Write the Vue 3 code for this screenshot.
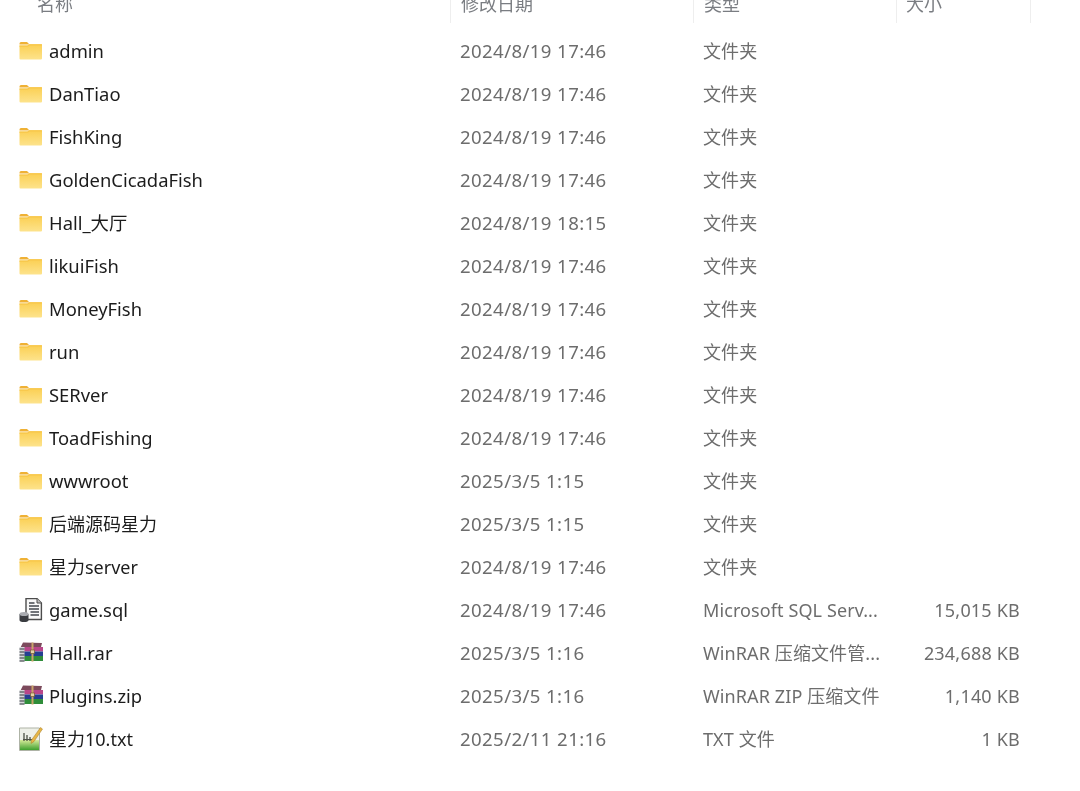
<script setup>
const rows = [
  { icon: 'folder', name: 'admin', date: '2024/8/19 17:46', type: '文件夹', size: '' },
  { icon: 'folder', name: 'DanTiao', date: '2024/8/19 17:46', type: '文件夹', size: '' },
  { icon: 'folder', name: 'FishKing', date: '2024/8/19 17:46', type: '文件夹', size: '' },
  { icon: 'folder', name: 'GoldenCicadaFish', date: '2024/8/19 17:46', type: '文件夹', size: '' },
  { icon: 'folder', name: 'Hall_大厅', date: '2024/8/19 18:15', type: '文件夹', size: '' },
  { icon: 'folder', name: 'likuiFish', date: '2024/8/19 17:46', type: '文件夹', size: '' },
  { icon: 'folder', name: 'MoneyFish', date: '2024/8/19 17:46', type: '文件夹', size: '' },
  { icon: 'folder', name: 'run', date: '2024/8/19 17:46', type: '文件夹', size: '' },
  { icon: 'folder', name: 'SERver', date: '2024/8/19 17:46', type: '文件夹', size: '' },
  { icon: 'folder', name: 'ToadFishing', date: '2024/8/19 17:46', type: '文件夹', size: '' },
  { icon: 'folder', name: 'wwwroot', date: '2025/3/5 1:15', type: '文件夹', size: '' },
  { icon: 'folder', name: '后端源码星力', date: '2025/3/5 1:15', type: '文件夹', size: '' },
  { icon: 'folder', name: '星力server', date: '2024/8/19 17:46', type: '文件夹', size: '' },
  { icon: 'sql', name: 'game.sql', date: '2024/8/19 17:46', type: 'Microsoft SQL Serv...', size: '15,015 KB' },
  { icon: 'rar', name: 'Hall.rar', date: '2025/3/5 1:16', type: 'WinRAR 压缩文件管...', size: '234,688 KB' },
  { icon: 'rar', name: 'Plugins.zip', date: '2025/3/5 1:16', type: 'WinRAR ZIP 压缩文件', size: '1,140 KB' },
  { icon: 'txt', name: '星力10.txt', date: '2025/2/11 21:16', type: 'TXT 文件', size: '1 KB' },
]
const startsCjk = (name) => /^[^\x00-\x7f]/.test(name)
</script>

<template>
  <div class="page">
    <svg width="0" height="0" class="defs">
      <defs>
        <linearGradient id="folderBody" x1="0" y1="0" x2="0" y2="1">
          <stop offset="0" stop-color="#fbcf52" />
          <stop offset="1" stop-color="#fde38c" />
        </linearGradient>
        <linearGradient id="txtGreen" x1="0" y1="0" x2="0" y2="1">
          <stop offset="0" stop-color="#d6ea9a" />
          <stop offset="1" stop-color="#3fa02e" />
        </linearGradient>
      </defs>
    </svg>

    <div class="header">
      <div class="head-cell head-name">名称</div>
      <div class="head-cell">修改日期</div>
      <div class="head-cell">类型</div>
      <div class="head-cell head-size">大小</div>
      <div class="head-rest"></div>
    </div>

    <div class="list">
      <div v-for="row in rows" :key="row.name" class="row">
        <div class="name-cell">
          <svg v-if="row.icon === 'folder'" class="icon" viewBox="0 0 24 24">
            <path d="M0.5 4.5 Q0.5 3 2 3 H8 L10.5 5.5 H0.5 Z" fill="#efb135" />
            <path d="M0.5 6.5 H8.5 L10.5 5.2 H22 Q23 5.2 23 6.2 V19.5 Q23 20.5 22 20.5 H1.5 Q0.5 20.5 0.5 19.5 Z" fill="url(#folderBody)" />
            <path d="M0.5 6.5 H8.5 L10.5 5.2 H23 V6.4 H10.8 L8.8 7.7 H0.5 Z" fill="#f8c64a" />
          </svg>

          <svg v-else-if="row.icon === 'sql'" class="icon" viewBox="0 0 24 24">
            <path d="M7 0.6 H18 L22.4 5 V21.5 H7 Z" fill="#f8f8f8" stroke="#4c4c4c" stroke-width="1.4" />
            <path d="M18 0.6 V5 H22.4" fill="#bdbdbd" stroke="#4c4c4c" />
            <path d="M10 5 H15.5 M10 8 H20 M10 11 H20 M11.5 14 H20 M11.5 17 H20" stroke="#43474d" stroke-width="1.4" />
            <path d="M0.5 16 H9.5 V22 Q9.5 24 5 24 Q0.5 24 0.5 22 Z" fill="#3a3c40" />
            <ellipse cx="5" cy="16" rx="4.5" ry="2" fill="#a9abb0" />
          </svg>

          <svg v-else-if="row.icon === 'rar'" class="icon" viewBox="0 0 24 24">
            <path d="M4 1.5 L23 2 L22 6 L1.5 6.5 Z" fill="#7c4a5c" />
            <path d="M1 6 H24 V10.5 H1 Z" fill="#b9468a" />
            <path d="M1 10.5 H24 V15 H1 Z" fill="#243f92" />
            <path d="M1 15 H24 V20 H1 Z" fill="#2f8d3a" />
            <path d="M0.5 6 H5.5 V20.5 H0.5 Z" fill="#d5d7da" />
            <path d="M0.5 8 H5.5 M0.5 11 H5.5 M0.5 14 H5.5 M0.5 17 H5.5 M0.5 20 H5.5" stroke="#33363d" stroke-width="1.1" />
            <path d="M12.5 1.5 H14.5 V20.5 H12.5 Z" fill="#c9a46a" />
            <path d="M11.5 9 H15.5 V12.5 H11.5 Z" fill="#e7d3a5" stroke="#6a4d22" stroke-width="0.6" />
          </svg>

          <svg v-else class="icon" viewBox="0 0 24 24">
            <path d="M0.5 1 H20.5 V23.5 H0.5 Z" fill="#eef0e8" stroke="#aeb3a6" />
            <path d="M1 13 H20 V23 H1 Z" fill="url(#txtGreen)" />
            <path d="M5 6 V14 M8 8 V14 M11 10 V14" stroke="#4d5146" stroke-width="1.3" />
            <path d="M4 12.5 H15" stroke="#4d5146" stroke-width="1" />
            <path d="M21.5 0.5 L23.5 2 L15 14.5 L12 16.5 L12.5 13 Z" fill="#e7b646" stroke="#a57a24" stroke-width="0.5" />
          </svg>
          <span class="name" :class="{ 'name-cjk': startsCjk(row.name) }">{{ row.name }}</span>
        </div>
        <div class="cell date">{{ row.date }}</div>
        <div class="cell type">{{ row.type }}</div>
        <div class="cell size">{{ row.size }}</div>
      </div>
    </div>
  </div>
</template>

<style>
html, body { margin: 0; background: #fff; overflow: hidden; }
</style>

<style scoped>
.page {
  width: 1080px;
  height: 791px;
  overflow: hidden;
  background: #fff;
  font-family: "Noto Sans", "Noto Sans CJK SC", sans-serif;
  font-size: 18px;
  color: #6d6d6d;
  filter: blur(0.3px);
}
.defs { position: absolute; }
.header {
  display: grid;
  grid-template-columns: 450px 243px 203px 134px 50px;
  height: 23px;
  line-height: 8px;
  color: #7a7d82;
}
.head-cell {
  padding-left: 10px;
  border-left: 1px solid #eeeeee;
  box-sizing: border-box;
}
.head-name { padding-left: 37px; border-left: 0; }
.head-size { padding-left: 9px; }
.head-rest { border-left: 1px solid #eeeeee; }
.list { padding-top: 6px; }
.row {
  display: grid;
  grid-template-columns: 450px 243px 203px 124px;
  height: 43px;
  line-height: 24px;
  align-items: center;
}
.name-cell {
  display: flex;
  align-items: center;
  padding-left: 19px;
  color: #1c1c1c;
  font-size: 18.4px;
}
.name-cjk { font-size: 18px; }
.icon { width: 24px; height: 24px; flex: none; margin-right: 6px; }
.cell { padding-left: 10px; white-space: nowrap; }
.date { font-size: 18.6px; letter-spacing: 0.4px; }
.type { letter-spacing: 0.1px; }
.size { text-align: right; padding-left: 0; letter-spacing: 0.2px; }
</style>
